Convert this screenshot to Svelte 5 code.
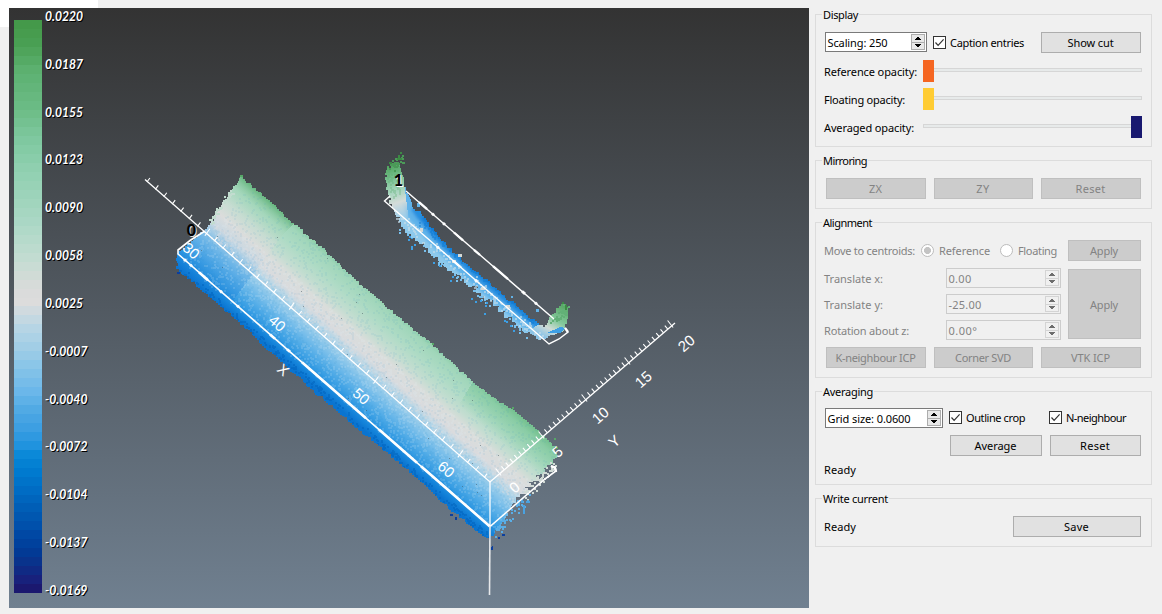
<script>
  // Widens or tightens letter spacing so a label takes its designed width.
  function fit(node, w) {
    const cur = node.getBoundingClientRect().width;
    const n = node.textContent.length;
    node.style.letterSpacing = (w + 1 - cur) / n + 'px';
  }

  function rng(seed) {
    let s = seed;
    return () => {
      s = (s * 1664525 + 1013904223) % 4294967296;
      return s / 4294967296;
    };
  }

  // Scalar bar
  const ramp = [
    [20, 0x439848], [45, 0x4aa054], [70, 0x5cb070], [110, 0x6cbc86], [140, 0x7fc8a0], [170, 0x90d0b0],
    [200, 0x9fd4bc], [225, 0xacd8c6], [260, 0xc4dcd2], [288, 0xd9dbda], [304, 0xdcdcdc], [311, 0xcfdadf],
    [330, 0xb4d5e5], [345, 0xa4cfe6], [370, 0x84c3e8], [390, 0x6db8ea], [410, 0x50aae4], [430, 0x3a9de2],
    [445, 0x2194de], [455, 0x0a88d8], [470, 0x007cd0], [490, 0x006cc4], [510, 0x005cb4], [530, 0x004ca8],
    [550, 0x003c98], [565, 0x0c3088], [580, 0x18207c], [593, 0x1c1468]
  ];
  function rampColor(y) {
    let i = 0;
    while (i < ramp.length - 2 && ramp[i + 1][0] < y) i++;
    const [y0, a] = ramp[i];
    const [y1, b] = ramp[i + 1];
    const k = (y - y0) / (y1 - y0);
    const c = [16, 8, 0].map((s) => Math.round(((a >> s) & 255) * (1 - k) + ((b >> s) & 255) * k));
    return `rgb(${c.join(',')})`;
  }
  const bands = Array.from({ length: 64 }, (_, i) => {
    const y = Math.round(20 + i * 8.953);
    const e = Math.round(20 + (i + 1) * 8.953);
    return { y, h: e - y, c: rampColor((y + e) / 2) };
  });
  const scale = ['0.0220', '0.0187', '0.0155', '0.0123', '0.0090', '0.0058', '0.0025', '-0.0007', '-0.0040', '-0.0072', '-0.0104', '-0.0137', '-0.0169'];

  // Staircase outline with a ragged edge
  function ragged(pts, amp, seed) {
    const r = rng(seed);
    let d = '';
    pts.forEach((p, i) => {
      const q = pts[(i + 1) % pts.length];
      const a = p[2] ?? amp;
      const len = Math.hypot(q[0] - p[0], q[1] - p[1]);
      const n = Math.max(1, Math.round(len / 2.6));
      const nx = (q[1] - p[1]) / len;
      const ny = -(q[0] - p[0]) / len;
      for (let k = 0; k < n; k++) {
        const o = (r() - 0.5) * 2 * a;
        const x = Math.round(p[0] + ((q[0] - p[0]) * k) / n + nx * o);
        const y = Math.round(p[1] + ((q[1] - p[1]) * k) / n + ny * o);
        d += d ? `H${x}V${y}` : `M${x} ${y}`;
      }
    });
    return d + 'Z';
  }
  const slab = ragged([
    [241, 177], [270, 202], [290, 221], [310, 238], [330, 256], [360, 284], [380, 301], [400, 319], [432, 345],
    [460, 371], [491, 397], [513, 410], [543, 436], [555, 447], [555, 456, 3], [547, 468, 3], [534, 480, 3], [526, 492, 3],
    [514, 505, 2], [502, 524], [490, 540], [470, 525], [450, 508], [420, 480], [380, 446], [340, 413], [300, 378],
    [270, 351], [240, 322], [200, 288], [177, 268], [177, 253], [193, 240], [210, 223], [218, 209], [231, 191]
  ], 1.1, 11);
  const arc = ragged([
    [398, 164, 3], [388, 166], [386, 175], [387, 190], [391, 206], [396, 217, 3], [402, 226, 3], [410, 235, 3], [420, 243, 3],
    [433, 254, 3], [447, 267, 3], [463, 280, 3], [476, 290, 3], [490, 301, 3], [506, 316, 3], [523, 330, 2.5],
    [534, 337], [541, 340], [548, 336], [562, 331], [567, 322], [568, 306], [563, 304], [557, 310], [551, 318],
    [545, 327], [537, 322], [528, 315], [515, 304], [500, 292], [487, 280], [470, 266], [455, 253], [440, 237],
    [430, 224], [422, 214], [412, 204], [408, 193], [404, 185], [402, 170]
  ], 1.2, 5);

  function specks(n, seed, pick, size = 2) {
    const r = rng(seed);
    let d = '';
    for (let i = 0; i < n; i++) {
      const [x, y] = pick(r);
      d += `M${Math.round(x)} ${Math.round(y)}h${size}v${size}h-${size}z`;
    }
    return d;
  }
  const onSlab = (a, b) => (r) => {
    const u = r() * 425;
    const v = a + r() * (b - a);
    return [177 + u * 0.754 + v * 0.657, 267 + u * 0.657 - v * 0.754];
  };
  const lightGrain = specks(2000, 21, onSlab(8, 70));
  const darkGrain = specks(2400, 31, onSlab(0, 115));
  const blackGrain = specks(34, 41, onSlab(10, 105), 1);
  const pinkGrain = specks(500, 51, onSlab(44, 60));
  const deepEdge = specks(260, 61, onSlab(-2, 4));
  const along = (x0, y0, x1, y1, w) => (r) => {
    const k = r();
    return [x0 + (x1 - x0) * k + (r() - 0.5) * w, y0 + (y1 - y0) * k + (r() - 0.5) * w];
  };
  const fringe = specks(80, 71, along(396, 222, 530, 336, 11));
  const fringeDeep = specks(24, 72, along(400, 230, 520, 336, 10));
  const arcPale = specks(120, 73, along(398, 216, 538, 336, 9));
  const arcDeep = specks(170, 74, along(422, 222, 535, 320, 8));
  const headDots = specks(30, 75, along(390, 170, 401, 157, 8));
  const headGrain = specks(50, 76, along(391, 170, 396, 194, 11));
  const tailDots = specks(30, 77, along(566, 306, 553, 322, 9));
  const endPale = specks(46, 78, along(525, 496, 554, 463, 8));
  const endBlue = specks(36, 79, along(496, 532, 528, 496, 9));
  const leftDots = specks(34, 80, along(207, 225, 232, 189, 5));

  // Axis ticks
  const ticksX = Array.from({ length: 41 }, (_, i) => {
    const x = 147.4 + i * 8.43;
    const y = 181 + i * 7.39;
    const major = i % 10 === 7;
    return major ? `M${x - 1.5} ${y + 3}l5 -7` : `M${x - 0.5} ${y + 1}l3 -4`;
  }).join('');
  const ticksY = Array.from({ length: 41 }, (_, i) => {
    const x = 499.6 + i * 4.3;
    const y = 473.5 - i * 3.7;
    return i % 10 === 0 ? `M${x + 1.5} ${y + 2}l-5.500 -7` : `M${x + 0.5} ${y}l-3 -3.500`;
  }).join('');

  const axisX = [['30', 191, 251], ['40', 277, 323.5], ['50', 361, 396.5], ['60', 446, 469.5], ['X', 283, 370]];
  const axisY = [['0', 514.5, 487.5], ['5', 557.5, 452], ['10', 600.5, 415.5], ['15', 643.5, 379.5], ['20', 686.5, 343.5], ['Y', 614.5, 441.5]];
  const sliders = [
    ['Reference opacity:', 92, '#f56622', 0],
    ['Floating opacity:', 80, '#ffcc33', 0],
    ['Averaged opacity:', 89, '#191970', 208]
  ];
  const moves = [['Translate x:', 58, '0.00', 22], ['Translate y:', 58, '-25.00', 32], ['Rotation about z:', 84, '0.00°', 28]];
</script>

{#snippet t(s, w)}<span class="t" use:fit={w}>{s}</span>{/snippet}

{#snippet spin(s, w, kind)}
  <div class="spin {kind}">
    {@render t(s, w)}
    <svg width="14" height="16" viewBox="0 0 14 16" shape-rendering="crispEdges">
      <rect class="sb" x=".5" y=".5" width="13" height="7.5" />
      <rect class="sb" x=".5" y="8" width="13" height="7.5" />
      <path class="ar" d="M6 3h2v1h1v1h1v1H4V5h1V4h1zM4 10h6v1H9v1H8v1H6v-1H5v-1H4z" />
    </svg>
  </div>
{/snippet}

{#snippet check(s, w)}
  <div class="check">
    <svg width="13" height="13" viewBox="0 0 13 13">
      <rect x=".5" y=".5" width="12" height="12" fill="#fff" stroke="#333" />
      <path d="M2.500 6.500l2.600 2.800L10.600 3.400" fill="none" stroke="#333" stroke-width="1.2" />
    </svg>
    {@render t(s, w)}
  </div>
{/snippet}

<div class="page">
  <div class="corner"></div>
  <svg class="view" width="800" height="600" viewBox="9 8 800 600">
    <defs>
      <linearGradient id="bg" x1="0" y1="0" x2="0" y2="1">
        <stop offset="0" stop-color="#333" /><stop offset="1" stop-color="#708090" />
      </linearGradient>
      <linearGradient id="cloud" gradientUnits="userSpaceOnUse" x1="177" y1="267" x2="251.2" y2="181.8">
        <stop offset="0" stop-color="#0a74d0" /><stop offset=".06" stop-color="#1686dc" />
        <stop offset=".12" stop-color="#339be3" /><stop offset=".2" stop-color="#50abe7" />
        <stop offset=".29" stop-color="#76bdea" /><stop offset=".37" stop-color="#96cbea" />
        <stop offset=".44" stop-color="#b8d6e6" /><stop offset=".5" stop-color="#d8dbde" />
        <stop offset=".6" stop-color="#dadddb" /><stop offset=".69" stop-color="#c2ddd0" />
        <stop offset=".81" stop-color="#aedbc5" /><stop offset=".93" stop-color="#a0d6ba" />
        <stop offset="1" stop-color="#86cba0" />
      </linearGradient>
      <linearGradient id="seam" gradientUnits="userSpaceOnUse" x1="177" y1="267" x2="251.2" y2="181.8">
        <stop offset="0" stop-color="#1078d4" stop-opacity=".4" /><stop offset=".35" stop-color="#2c90e0" stop-opacity=".3" />
        <stop offset=".5" stop-color="#b8d4e6" stop-opacity=".4" /><stop offset=".6" stop-color="#dcdcdc" stop-opacity=".6" />
        <stop offset=".72" stop-color="#d0dcd6" stop-opacity=".5" /><stop offset=".86" stop-color="#9ed4b4" stop-opacity=".4" />
        <stop offset="1" stop-color="#4fa867" stop-opacity=".8" />
      </linearGradient>
      <linearGradient id="end" gradientUnits="userSpaceOnUse" x1="512" y1="452" x2="540" y2="420">
        <stop offset="0" stop-color="#8ccea8" stop-opacity="0" /><stop offset=".6" stop-color="#84caa0" stop-opacity=".8" />
        <stop offset="1" stop-color="#5cb274" />
      </linearGradient>
      <linearGradient id="head" gradientUnits="userSpaceOnUse" x1="386" y1="165" x2="404" y2="220">
        <stop offset="0" stop-color="#4ba057" /><stop offset=".25" stop-color="#78c090" />
        <stop offset=".5" stop-color="#aad6c0" /><stop offset=".68" stop-color="#d4dcd9" />
        <stop offset="1" stop-color="#d0dbe0" stop-opacity=".1" />
      </linearGradient>
      <linearGradient id="tail" gradientUnits="userSpaceOnUse" x1="566" y1="303" x2="546" y2="338">
        <stop offset="0" stop-color="#4fa05b" /><stop offset=".5" stop-color="#84c89c" />
        <stop offset=".75" stop-color="#cfdcd6" /><stop offset="1" stop-color="#8cc4e6" />
      </linearGradient>
      <filter id="soft"><feGaussianBlur stdDeviation="1.6" /></filter>
      <clipPath id="slabClip"><path d={slab} /></clipPath>
      <clipPath id="arcClip"><path d={arc} /></clipPath>
    </defs>
    <rect x="9" y="8" width="800" height="600" fill="url(#bg)" />

    {#each bands as b}<rect x="14" y={b.y} width="28" height={b.h} fill={b.c} />{/each}
    {#each scale as s, i}
      {@const y = 21 + i * 47.83}
      {@const neg = s[0] === '-'}
      <text class="num" x="46" y={y + 1} fill="#000" textLength={neg ? 42.5 : 38} lengthAdjust="spacingAndGlyphs">{s}</text>
      <text class="num" x="45" y={y} fill="#fff" textLength={neg ? 42.5 : 38} lengthAdjust="spacingAndGlyphs">{s}</text>
    {/each}

    <g shape-rendering="crispEdges">
      <path d={slab} fill="url(#cloud)" />
      <g clip-path="url(#slabClip)">
        <path d="M241 170L310 206L280 238L232 302L160 262Z" fill="url(#seam)" />
        <path d="M480 370L560 440L560 470L520 500L450 420Z" fill="url(#end)" />
        <path d={deepEdge} fill="#0062bc" fill-opacity=".5" />
        <path d={lightGrain} fill="#e2f1fa" fill-opacity=".15" />
        <path d={darkGrain} fill="#2b8cc0" fill-opacity=".07" />
        <path d={pinkGrain} fill="#e0dcde" fill-opacity=".35" />
        <path d={blackGrain} fill="#40515a" fill-opacity=".5" />
      </g>
      <path d={leftDots} fill="#c2dccf" />
      <path d={endPale} fill="#d0dad5" />
      <path d="M556 447h2v2h-2zM512 407h2v2h-2zM432 343h2v2h-2zM240 175h3v2h-3zM554 438h2v2h-2z" fill="#57a867" />
      <path d={endBlue} fill="#5aaee6" />
      <path d="M523 505h2v9h-2zM526 501h4v2h-4zM521 499h2v4h-2z" fill="#4aa2e0" />
      <path d="M450 514h3v2h-3zM455 517h2v3h-2zM492 546h1v4h-2v-2zM498 537h2v2h-2zM502 534h3v2h-3zM177 272h3v2h-3z" fill="#0c3f9e" />

      <path d={fringe} fill="#78bfec" />
      <path d={fringeDeep} fill="#3d9fe4" />
      <path d={arc} fill="#8dc9ec" />
      <g clip-path="url(#arcClip)">
        <g fill="none" filter="url(#soft)">
          <path d="M404 185L416 214L436 238L470 271L515 309L540 330" stroke="#5fb2ea" stroke-width="17" />
          <path d="M416 206L422 215L438 235L471 267L516 305L541 325" stroke="#258fe0" stroke-width="12" />
          <path d="M424 216L441 236L472 265L517 303L537 320" stroke="#0a7ad4" stroke-width="7" />
        </g>
        <path d={arcDeep} fill="#0c78d0" fill-opacity=".45" />
        <path d="M380 150H404L405 190L410 230L380 215Z" fill="url(#head)" />
        <path d="M574 300H560L541 323L528 331L538 345H560L574 325Z" fill="url(#tail)" />
        <path d={headGrain} fill="#5cab70" fill-opacity=".3" />
      </g>
      <path d={arcPale} fill="#c6dde9" fill-opacity=".65" />
      <path d={headDots} fill="#4b9a58" />
      <path d={tailDots} fill="#62b077" />
      <path d="M400 152h2v2h-2zM398 155h2v3h-2zM397 158h5v2h-5zM389 162h3v2h-3zM562 302h2v2h-2zM565 305h2v5h-2z" fill="#3c8a44" />
      <path d="M417 203h3v4h-3zM536 309h3v3h-3zM511 296h2v2h-2z" fill="#62b2e8" />
      <path d="M452 260h4v3h-4zM458 254h4v3h-4zM481 287h4v3h-4zM506 305h4v3h-4zM420 228h3v4h-3z" fill="#d5d9d6" />
      <path d="M547 333L560 327L565 328L560 333Z" fill="#3d9fe4" />
    </g>

    <g fill="none" stroke="#fff" stroke-width="1.3">
      <path d="M145 179.500L490 482L675 323" />
      <path d="{ticksX}{ticksY}" stroke-width="1.1" />
      <path d="M205 231L190 240.500L178 250V254L490 526.500L545 479L556 471L555 467L551 466" stroke-width="1.6" />
      <path d="M302 362.300L366 418.200M379 429.600L417 462.700M421 466.200L490 526.500M199 272.300L208 280.200M270 334.400L275 338.700" stroke-width="2.6" />
      <path d="M490 482V526.500" />
      <path d="M490 526L489.500 595" stroke="#e6e8ea" stroke-width="1.6" />
      <path d="M551 466l4 2 1 4" stroke-width="2.5" />
      <path d="M406 191L554 319M390 196L384.500 201L549 344L559 339L568 332L565 328" stroke-width="1.4" />
      <path d="M419 202.200L427 209.200M454 232.500L463 240.300M474 249.800L480 255M493 266.200L508 279.200M453 260.600L460 266.600M565 328l3 4" stroke-width="2.3" />
      <path d="M184 259.200l2 1.700M190 264.500l2 1.700M220 290.700l2 1.700M237 305.500l2 1.700M287 349.200l3 2.600M432 213.500l2 1.700M443 223l2 1.700M522 291.300l3 2.600M535 302.600l2 1.700M437 246.600l2 1.700M475 279.700l2 1.700" stroke-width="2.8" />
    </g>
    <g fill="#fff" class="axis">
      {#each axisX as [s, x, y]}<text transform="translate({x} {y}) rotate(41)" y="5">{s}</text>{/each}
      {#each axisY as [s, x, y]}<text transform="translate({x} {y}) rotate(-41)" y="5">{s}</text>{/each}
    </g>
    <g class="cap">
      <text x="192.500" y="236.500" fill="#ddd">0</text><text x="191.500" y="235.500">0</text>
      <text x="399.500" y="187" fill="#fff">1</text><text x="398.500" y="186">1</text>
    </g>
  </svg>

  <aside>
    <section class="display">
      <h2>{@render t('Display', 34)}</h2>
      <div class="row top">
        {@render spin('Scaling: 250', 59, 'w102')}
        {@render check('Caption entries', 73)}
        <button class="w100 push">{@render t('Show cut', 45)}</button>
      </div>
      {#each sliders as [s, w, c, v]}
        <div class="row slide">
          <div class="lab">{@render t(s, w)}</div>
          <div class="track"><i style="background:{c};margin-left:{v}px"></i></div>
        </div>
      {/each}
    </section>

    <section class="mirror">
      <h2>{@render t('Mirroring', 43)}</h2>
      <div class="three">
        <button disabled>{@render t('ZX', 12)}</button>
        <button disabled>{@render t('ZY', 12.5)}</button>
        <button disabled>{@render t('Reset', 29)}</button>
      </div>
    </section>

    <section class="align">
      <h2>{@render t('Alignment', 48)}</h2>
      <div class="row dim move">
        <div class="lab">{@render t('Move to centroids:', 90)}</div>
        <b class="radio on"></b>{@render t('Reference', 50)}
        <b class="radio second"></b>{@render t('Floating', 38)}
        <button class="w73 push" disabled>{@render t('Apply', 27)}</button>
      </div>
      <div class="row body dim">
        <div class="fields">
          {#each moves as [s, w, v, vw]}
            <div class="row">
              <div class="lab wide">{@render t(s, w)}</div>
              {@render spin(v, vw, 'w115 off')}
            </div>
          {/each}
        </div>
        <button class="w73 tall push" disabled>{@render t('Apply', 27)}</button>
      </div>
      <div class="three">
        <button disabled>{@render t('K-neighbour ICP', 79)}</button>
        <button disabled>{@render t('Corner SVD', 55)}</button>
        <button disabled>{@render t('VTK ICP', 38)}</button>
      </div>
    </section>

    <section class="avg">
      <h2>{@render t('Averaging', 49)}</h2>
      <div class="row">
        {@render spin('Grid size: 0.0600', 82, 'w118')}
        <div class="checks">{@render check('Outline crop', 58)}{@render check('N-neighbour', 59)}</div>
      </div>
      <div class="row pair">
        <button class="w92">{@render t('Average', 41)}</button>
        <button class="w91">{@render t('Reset', 29)}</button>
      </div>
      <div class="row ready">{@render t('Ready', 31)}</div>
    </section>

    <section class="write">
      <h2>{@render t('Write current', 64)}</h2>
      <div class="row">
        {@render t('Ready', 31)}
        <button class="w128 push">{@render t('Save', 24)}</button>
      </div>
    </section>
  </aside>
</div>

<style>
  :global(body) { background: #f0f0f0; overflow: hidden; }
  .page { display: flex; position: relative; width: 1162px; height: 614px; box-sizing: border-box; padding: 8px 0 0 9px; background: #f0f0f0; font: 11px/14px "Noto Sans", sans-serif; color: #000; }
  .corner { position: absolute; left: 0; top: 0; width: 98px; height: 27px; background: #fff; }
  .view { position: relative; flex: none; display: block; }
  .num { font: italic 700 12.4px Lato, sans-serif; }
  .axis { font: 15px "Liberation Sans", sans-serif; text-anchor: middle; }
  .cap { font: 900 16px Lato, sans-serif; text-anchor: middle; }
  aside { display: flex; flex-direction: column; gap: 13px; margin: 6px 0 0 6px; width: 337px; }
  section { box-sizing: border-box; border: 1px solid #dcdcdc; padding: 17px 10px 0 9px; }
  h2 { margin: -24px 0 10px -3px; height: 14px; font: inherit; width: max-content; background: #f0f0f0; padding: 0 1px; }
  .t { white-space: pre; display: inline-block; line-height: 14px; }
  .row { display: flex; align-items: center; }
  .display { height: 133px; }
  .mirror, .write { height: 49px; }
  .align { height: 156px; }
  .avg { height: 94px; }
  .push { margin-left: auto; }
  button { box-sizing: border-box; display: flex; align-items: center; justify-content: center; height: 21px; padding: 1px 1px 0 0; border: 1px solid #adadad; border-radius: 0; background: #e1e1e1; font: inherit; color: #000; flex: none; }
  button:disabled { background: #ccc; border-color: #bfbfbf; color: #838383; }
  .w100 { width: 100px; }
  .w73 { width: 73px; }
  .w92 { width: 92px; }
  .w91 { width: 91px; }
  .w128 { width: 128px; }
  .spin { box-sizing: border-box; display: flex; align-items: center; justify-content: space-between; height: 20px; padding: 0 1px 0 2px; border: 1px solid #7a7a7a; background: #fff; flex: none; }
  .spin .t { padding-top: 2px; margin-left: -0.5px; }
  .w102 { width: 102px; }
  .w118 { width: 118px; }
  .w115 { width: 115px; }
  .sb { fill: #e8e8e8; stroke: #adadad; }
  .ar { fill: #000; }
  .off { background: #f0f0f0; border-color: #ccc; }
  .off .sb { fill: #f0f0f0; stroke: #d4d4d4; }
  .off .ar { fill: #6d6d6d; }
  .check { display: flex; align-items: center; gap: 4px; }
  .check .t { padding-top: 1px; }
  .top { height: 21px; margin-bottom: 4px; }
  .top .spin { align-self: flex-start; }
  .top .check { margin-left: 6px; }
  .lab { flex: none; width: 98px; margin-left: -1px; padding-top: 2px; }
  .slide { height: 28px; }
  .track { display: flex; align-items: center; flex: none; box-sizing: border-box; width: 219px; height: 4px; margin: -2px 0 0 1px; border: 1px solid #d6d6d6; background: #e7eaea; }
  .track i { display: block; flex: none; width: 11px; height: 22px; position: relative; left: -1px; top: 1px; }
  .three { display: grid; grid-template-columns: 100px 99px 100px; column-gap: 8px; margin-left: 1px; }
  .dim { color: #838383; }
  .move { height: 21px; }
  .move .lab { width: 97px; padding-top: 0; }
  .radio { box-sizing: border-box; width: 13px; height: 13px; border: 1px solid #bcbcbc; border-radius: 50%; background: #fff; margin-right: 5px; flex: none; }
  .on { background: radial-gradient(circle, #c4c4c4 0 3.2px, #fff 3.8px); }
  .second { margin-left: 10px; }
  .body { margin: 7px 0 7px; align-items: flex-start; }
  .fields { display: flex; flex-direction: column; gap: 6px; }
  .lab.wide { width: 122px; }
  .tall { height: 70px; margin-top: 1px; }
  .avg h2 { margin-bottom: 9px; }
  .checks { display: grid; grid-template-columns: 100px auto; margin: -1px 0 0 6px; }
  .pair { gap: 8px; justify-content: flex-end; margin-top: 7px; }
  .ready { margin: 7px 0 0 -1px; }
  .write .row > .t { margin-left: -1px; padding-top: 1px; }
</style>
